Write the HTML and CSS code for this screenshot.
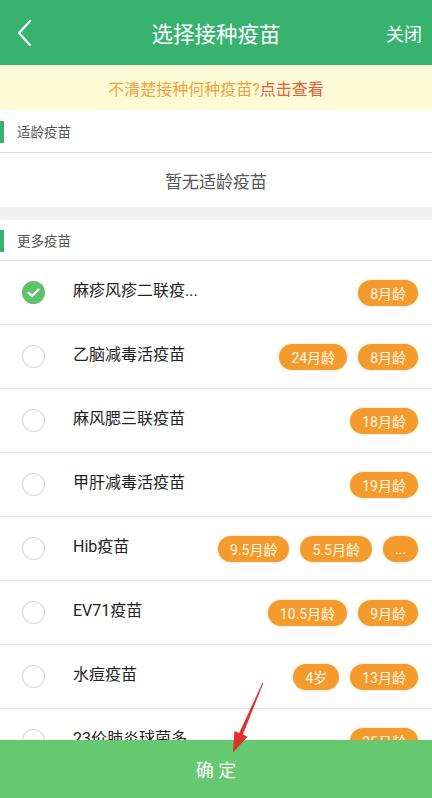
FILE: index.html
```html
<!DOCTYPE html>
<html lang="zh-CN">
<head>
    <meta charset="UTF-8">
    <meta name="viewport" content="width=device-width, initial-scale=1.0">
    <title>选择接种疫苗</title>
    <link rel="stylesheet" href="styles.css">
</head>
<body>
    <header class="topbar">
        <span class="back">
            <svg width="16" height="26" viewBox="0 0 16 26"><path d="M13 1 L2 13 L13 25" fill="none" stroke="#fff" stroke-width="2.2" stroke-linecap="round" stroke-linejoin="round"/></svg>
        </span>
        <h1>选择接种疫苗</h1>
        <span class="close">关闭</span>
    </header>

    <div class="tip">不清楚接种何种疫苗?<span class="tip-link">点击查看</span></div>

    <div class="section-head">适龄疫苗</div>
    <div class="empty">暂无适龄疫苗</div>
    <div class="gap"></div>

    <div class="section-head more">更多疫苗</div>
    <ul class="list">
        <li class="row">
            <span class="check on">
                <svg width="23" height="23" viewBox="0 0 23 23"><circle cx="11.5" cy="11.5" r="11.5" fill="#5fc06e"/><path d="M6.5 11.8 L10 15 L16.5 8.5" fill="none" stroke="#fff" stroke-width="2.2" stroke-linecap="round" stroke-linejoin="round"/></svg>
            </span>
            <span class="name">麻疹风疹二联疫...</span>
            <span class="tags"><span class="tag">8月龄</span></span>
        </li>
        <li class="row">
            <span class="check"></span>
            <span class="name">乙脑减毒活疫苗</span>
            <span class="tags"><span class="tag">24月龄</span><span class="tag">8月龄</span></span>
        </li>
        <li class="row">
            <span class="check"></span>
            <span class="name">麻风腮三联疫苗</span>
            <span class="tags"><span class="tag">18月龄</span></span>
        </li>
        <li class="row">
            <span class="check"></span>
            <span class="name">甲肝减毒活疫苗</span>
            <span class="tags"><span class="tag">19月龄</span></span>
        </li>
        <li class="row">
            <span class="check"></span>
            <span class="name">Hib疫苗</span>
            <span class="tags"><span class="tag">9.5月龄</span><span class="tag">5.5月龄</span><span class="tag">...</span></span>
        </li>
        <li class="row">
            <span class="check"></span>
            <span class="name">EV71疫苗</span>
            <span class="tags"><span class="tag">10.5月龄</span><span class="tag">9月龄</span></span>
        </li>
        <li class="row">
            <span class="check"></span>
            <span class="name">水痘疫苗</span>
            <span class="tags"><span class="tag">4岁</span><span class="tag">13月龄</span></span>
        </li>
        <li class="row">
            <span class="check"></span>
            <span class="name">23价肺炎球菌多...</span>
            <span class="tags"><span class="tag">25月龄</span></span>
        </li>
    </ul>

    <div class="confirm">确 定</div>

    <!-- red annotation arrow pointing at the confirm button -->
    <svg class="arrow" width="432" height="798" viewBox="0 0 432 798">
        <polygon points="262.6,682.6 263.4,683 242.9,734.5 247.6,736.7 233,752.5 234.4,731 239.2,732.9" fill="#e0312f"/>
    </svg>
</body>
</html>
```

FILE: styles.css
```css
body {
    margin: 0;
    font-family: Roboto, "Noto Sans CJK SC", sans-serif;
    background: #fff;
    color: #222;
}
.topbar {
    height: 65px;
    background: #37b36f;
    display: flex;
    align-items: center;
    padding: 0 10px 0 17px;
    color: #fff;
}
.back {
    width: 53px;
    display: flex;
    align-items: center;
}
.topbar h1 {
    flex: 1;
    margin: 0;
    text-align: center;
    font-size: 21.5px;
    font-weight: normal;
}
.close {
    width: 60px;
    text-align: right;
    font-size: 18px;
}
.tip {
    height: 45px;
    background: #fffad6;
    display: flex;
    align-items: center;
    justify-content: center;
    font-size: 16px;
    color: #f0a33c;
}
.tip-link {
    color: #e0603e;
}
.section-head {
    height: 42px;
    border-bottom: 1px solid #dcdcdc;
    display: flex;
    align-items: center;
    padding-left: 17px;
    font-size: 13.5px;
    color: #555;
    position: relative;
}
.section-head::before {
    content: "";
    position: absolute;
    left: 0;
    top: 11px;
    width: 4px;
    height: 22px;
    background: #37b36f;
}
.section-head.more {
    height: 40px;
}
.section-head.more::before {
    top: 10px;
}
.empty {
    height: 54px;
    display: flex;
    align-items: center;
    justify-content: center;
    font-size: 17px;
    color: #555;
}
.gap {
    height: 13px;
    background: #f0f0f2;
}
.list {
    list-style: none;
    margin: 0;
    padding: 0;
}
.row {
    height: 63px;
    border-bottom: 1px solid #e2e2e2;
    display: flex;
    align-items: center;
    padding: 0 14px 0 22px;
}
.check {
    width: 21px;
    height: 21px;
    border: 1px solid #cfcfcf;
    border-radius: 50%;
    flex-shrink: 0;
    margin-right: 28px;
}
.check.on {
    width: 23px;
    height: 23px;
    border: none;
    display: flex;
}
.name {
    flex: 1;
    font-size: 16px;
    white-space: nowrap;
    padding-bottom: 7px;
}
.tags {
    display: flex;
    gap: 11px;
}
.tag {
    height: 26px;
    padding: 0 12px;
    border-radius: 13px;
    background: #f39b2d;
    color: #fff6e4;
    font-size: 14px;
    display: flex;
    align-items: center;
    box-shadow: 0 0 2px rgba(243, 155, 45, 0.5);
}
.confirm {
    position: fixed;
    left: 0;
    right: 0;
    bottom: 0;
    height: 58px;
    background: #66c96f;
    color: #fff;
    font-size: 18px;
    display: flex;
    align-items: center;
    justify-content: center;
}
.arrow {
    position: absolute;
    left: 0;
    top: 0;
    pointer-events: none;
}
```
